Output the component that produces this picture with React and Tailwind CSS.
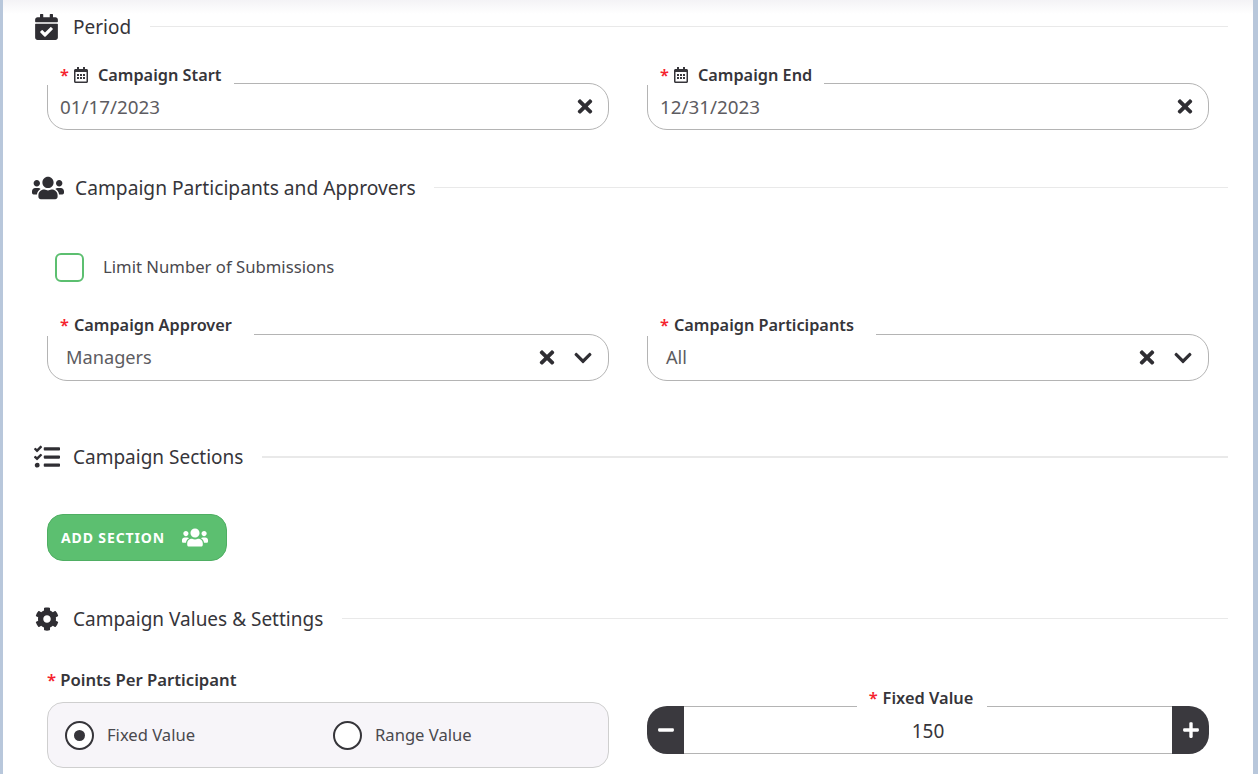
import React from "react";
import { FaCalendarCheck, FaUsers, FaTasks, FaCog, FaRegCalendarAlt, FaTimes, FaChevronDown, FaMinus, FaPlus } from "react-icons/fa";

const Star = ({ tight }) => <span className={`text-[#f5222d] font-semibold ${tight ? "mr-[4px]" : "mr-[5px]"}`}>*</span>;

function Heading({ icon, wrap, wide, line = "h-px bg-[#e9e9e9] mb-[2px]", className = "", children }) {
  return (
    <div className={`flex items-center h-6 ${className}`}>
      <div className={`flex items-center shrink-0 ${wrap}`}>{icon}</div>
      <h2 className={`leading-6 font-normal text-[#36353a] whitespace-nowrap ${wide ? "text-[19.2px]" : "text-[19px]"}`}>{children}</h2>
      <div className={`flex-1 ${wide ? "ml-[18px]" : "ml-[19px]"} ${line}`} />
    </div>
  );
}

function Field({ label, value, labelW, calendar, select }) {
  return (
    <div className="relative h-[47px] rounded-[20px] rounded-tl-none border border-[#b4b4b4] flex items-center">
      <div className={`absolute -left-px -top-[19px] h-5 bg-white flex items-center pl-[13px] text-[16.3px] leading-5 font-semibold text-[#36353a] whitespace-nowrap ${select ? "pb-[2px]" : "pb-[1px]"} ${labelW}`}>
        <Star />
        {calendar && <FaRegCalendarAlt className="w-[14px] h-[16px] mr-[10px] text-[#36353a]" />}
        {label}
      </div>
      <span className={`flex-1 ${select ? "pl-[18px] text-[18.2px]" : "pt-[2px] pl-[12px] text-[18.8px]"} text-[#5d5c61]`}>{value}</span>
      <FaTimes className={`w-[16px] h-[21px] text-[#2f2e33] ${select ? "mr-[18px]" : "mr-[15px]"}`} />
      {select && <FaChevronDown className="w-[20px] h-[20px] mr-[15px] text-[#2f2e33]" />}
    </div>
  );
}

function Radio({ checked, label, className = "" }) {
  return (
    <label className={`flex items-center ${className}`}>
      <span className="w-[29px] h-[29px] rounded-full border-2 border-[#36353a] flex items-center justify-center bg-white shrink-0">
        {checked && <span className="w-[11px] h-[11px] rounded-full bg-[#36353a]" />}
      </span>
      <span className="text-[16.6px] text-[#4a494e] ml-[13px]">{label}</span>
    </label>
  );
}

export default function App() {
  return (
    <div className="h-[774px] overflow-hidden bg-white border-l-[3px] border-r-[5px] border-[#b8c7db] bg-[linear-gradient(#f4f3f6,#ffffff_14px)] pl-[29px] pr-[25px] pt-[15px] font-['Noto_Sans',sans-serif]">
      <Heading icon={<FaCalendarCheck className="w-[23px] h-[26px] text-[#2f2e33]" />} wrap="w-[41px] pl-[3px]">Period</Heading>

      <div className="ml-[15px] mr-[19px] mt-[44px] grid grid-cols-2 gap-x-[38px]">
        <Field label="Campaign Start" value="01/17/2023" labelW="w-[187px]" calendar />
        <Field label="Campaign End" value="12/31/2023" labelW="w-[177px]" calendar />
      </div>

      <Heading wide className="mt-[46px]" icon={<FaUsers className="w-[32px] h-[26px] text-[#2f2e33]" />} wrap="w-[43px]">Campaign Participants and Approvers</Heading>

      <div className="ml-[23px] mt-[53px] flex items-center h-[29px]">
        <span className="w-[29px] h-[29px] rounded-[6px] border-2 border-[#5cbf70] bg-white" />
        <span className="ml-[19px] mb-[2px] text-[16.7px] text-[#4a494e]">Limit Number of Submissions</span>
      </div>

      <div className="ml-[15px] mr-[19px] mt-[52px] grid grid-cols-2 gap-x-[38px]">
        <Field label="Campaign Approver" value="Managers" labelW="w-[207px]" select />
        <Field label="Campaign Participants" value="All" labelW="w-[229px]" select />
      </div>

      <Heading className="mt-[64px]" line="h-[2px] bg-[#e9e9e9]" icon={<FaTasks className="w-[26px] h-[26px] text-[#2f2e33]" />} wrap="w-[41px] pl-[2px]">Campaign Sections</Heading>

      <div className="ml-[15px] mt-[45px]">
        <button className="w-[180px] h-[47px] rounded-[16px] bg-[#5cbf70] border border-[#4fae63] flex items-center pl-[13px] text-white text-[14px] font-bold tracking-[0.88px]">
          ADD SECTION
          <FaUsers className="ml-[17px] w-[26px] h-[21px] text-white" />
        </button>
      </div>

      <Heading className="mt-[46px]" icon={<FaCog className="w-[24px] h-[24px] text-[#2f2e33]" />} wrap="w-[41px] pl-[3px]">Campaign Values &amp; Settings</Heading>

      <div className="ml-[15px] mr-[19px] mt-[39px] grid grid-cols-2 gap-x-[38px]">
        <div>
          <div className="h-5 flex items-center pb-[1px] text-[16.7px] leading-5 font-semibold text-[#36353a]"><Star tight />Points Per Participant</div>
          <div className="mt-3 h-[66px] rounded-[16px] border border-[#cfcfcf] bg-[#f7f5f9] flex items-center pl-[17px]">
            <Radio checked label="Fixed Value" className="w-[268px]" />
            <Radio label="Range Value" />
          </div>
        </div>
        <div className="pt-[36px]">
          <div className="relative h-[48px] flex items-stretch">
            <div className="absolute left-[210px] -top-[18px] w-[130px] h-5 bg-white flex items-center justify-center pb-[1px] pr-[2px] text-[16.4px] leading-5 font-semibold text-[#36353a] whitespace-nowrap">
              <Star />Fixed Value
            </div>
            <button className="w-[37px] bg-[#3a393e] rounded-l-[20px] flex items-center justify-center pl-[1px]">
              <FaMinus className="w-[18px] h-[18px] text-white" />
            </button>
            <div className="flex-1 border-y border-[#b4b4b4] flex items-center justify-center pt-[2px] text-[19px] text-[#36353a]">150</div>
            <button className="w-[37px] bg-[#3a393e] rounded-r-[20px] flex items-center justify-center">
              <FaPlus className="w-[18px] h-[18px] text-white" />
            </button>
          </div>
        </div>
      </div>
    </div>
  );
}
